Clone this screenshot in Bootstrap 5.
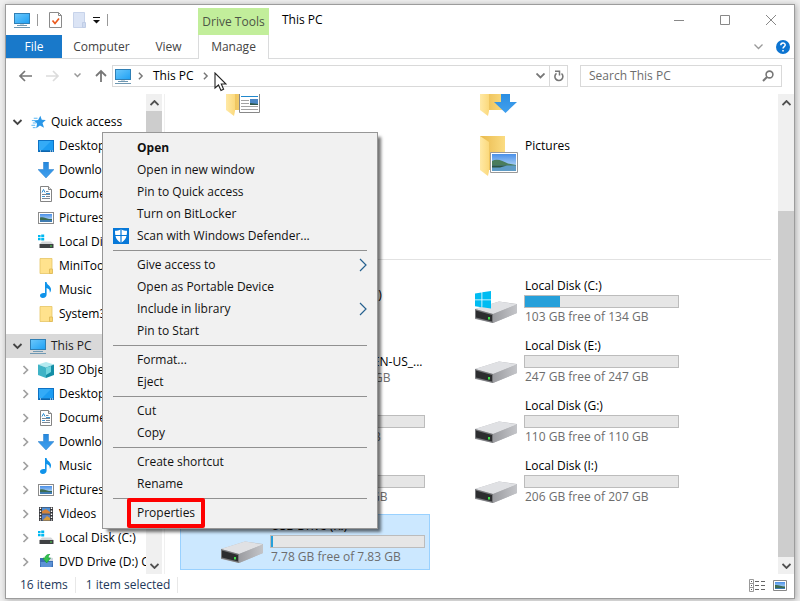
<!DOCTYPE html>
<html lang="en">
<head>
<meta charset="utf-8">
<meta name="viewport" content="width=device-width, initial-scale=1">
<title>This PC</title>
<link href="https://cdn.jsdelivr.net/npm/bootstrap@5.3.0/dist/css/bootstrap.min.css" rel="stylesheet">
<style>
body{font-family:"Open Sans","Noto Sans",sans-serif;font-size:12px;line-height:16px;color:#000;background:#efefef;height:100vh;padding:4px 5px;overflow:hidden}
a,a:hover{color:inherit;text-decoration:none}
button{background:none;border:0;padding:0;color:inherit}
svg{display:block;flex:none}
.win{border:1px solid #9c9c9c;background:#fff;box-shadow:1px 1px 6px rgba(0,0,0,.3)}
.i16{width:16px;height:16px}
/* title bar and ribbon tabs */
.titlebar{height:30px}
.quick{width:192px;padding-left:8px;gap:7px}
.vline{width:1px;height:12px;background:#999}
.drivetools{width:71px;height:27px;background:#c2ee9b;color:#4c5546}
.caption-text{padding-left:13px}
.caption-btn{width:46px;height:30px}
.tabs{height:24px;border-bottom:1px solid #dadbdc;color:#444}
.tabs a{height:23px;display:flex;align-items:center;justify-content:center}
.tabs .file{width:56px;background:#1979ca;color:#fff}
.tabs .t-computer{width:79px}
.tabs .t-view{width:55px}
.tabs .t-manage{width:71px;height:24px;margin-left:2px;border:solid #dadbdc;border-width:0 1px;background:#fff}
.tabs .tools{gap:13px}
.helpbtn{width:14px;height:14px}
/* address row */
.addr{height:35px;padding:0 12px 2px 12px}
.navbtns{width:94px;gap:14px}
.field{height:22px;border:1px solid #d9d9d9}
.addrbox{margin-right:12px;padding-left:2px}
.addrbox .crumb{margin:0 6px 0 7px}
.addrbox .sep-btn{width:18px;height:20px;border-left:1px solid #d9d9d9}
.searchbox{width:202px;padding:0 7px 0 8px}
.searchbox input{border:0;outline:0;padding:0;width:100%;height:18px;background:none;color:#555}
.searchbox input::placeholder{color:#6d6d6d;opacity:1}
.pointer{position:absolute;left:208px;top:67px}
/* navigation pane */
.side{width:159px;border-right:1px solid #f0f0f0}
.tree{overflow:hidden;padding-top:16px;width:140px}
.tree a{height:24px;display:flex;align-items:center;white-space:nowrap;gap:5px;padding-left:14px}
.tree a .tw{width:11px;height:10px;margin-right:2px}
.tree a.top{padding-left:6px}
.tree a.here{background:#d9d9d9;margin-top:8px;color:#222}
.sbar{width:16px;background:#f0f0f0}
.sbar .cap{height:17px}
.sbar .thumb{background:#cdcdcd}
.thumb-side{height:190px}
.thumb-main{margin-top:100px}
/* file view */
.view{overflow:hidden;padding-left:15px}
.tiles{display:grid;grid-template-columns:250px 250px;grid-auto-rows:56px;gap:4px}
.folders{margin-top:-20px}
.groupline{margin:9px 7px 14px 0;border:0;border-top:1px solid #e2e2e2;opacity:1}
.tile{display:flex;border:1px solid transparent;white-space:nowrap}
.tile.on{background:#cce8ff;border-color:#99d1ff}
.tile .pic{width:89px;padding-left:39px}
.tile .pic svg{width:44px;height:54px}
.tile .info{width:155px;padding-top:3px}
.tile .nm{padding-left:1px;overflow:hidden}
.tile .sub{padding-left:1px;color:#6d6d6d}
.tile .meter{height:13px;margin:1px 0 1px;border:1px solid #bcbcbc;background:#e6e6e6;border-radius:0}
.tile .meter .fill{background:#26a0da}
/* status bar */
.status{height:24px;color:#1e395b;padding:0 7px 2px 14px}
.status .cell{padding-right:7px;margin-right:10px;border-right:1px solid #e8e8e8}
/* context menu */
.ctx{position:absolute;left:96px;top:127px;width:276px;background:#f1f1f1;border:1px solid #979797;padding:4px 2px;box-shadow:4px 4px 3px -1px rgba(0,0,0,.55);color:#111}
.ctx button{display:flex;align-items:center;width:100%;height:22px;padding:0 8px 0 8px;text-align:left}
.ctx .gut{width:24px}
.ctx hr{margin:3px 8px;border:0;border-top:1px solid #919191;opacity:1}
.callout{position:absolute;left:-10px;top:-7px;width:78px;height:30px;border:4px solid #fe0000;border-radius:2px}
</style>
<script src="https://cdn.jsdelivr.net/npm/bootstrap@5.3.0/dist/js/bootstrap.bundle.min.js"></script>
</head>
<body class="d-flex flex-column">
<svg width="0" height="0" class="position-absolute" aria-hidden="true">
<defs>
<linearGradient id="gScreen" x1="0" y1="0" x2="1" y2="1"><stop offset="0" stop-color="#6cc8fb"/><stop offset="1" stop-color="#1ea0f4"/></linearGradient>
<linearGradient id="gFold" x1="0" y1="0" x2="1" y2="0"><stop offset="0" stop-color="#e9b94c"/><stop offset="1" stop-color="#fbdc82"/></linearGradient>
<linearGradient id="gFlap" x1="0" y1="0" x2="1" y2="0"><stop offset="0" stop-color="#ffe9a6"/><stop offset="1" stop-color="#fbd97c"/></linearGradient>
<linearGradient id="gSky" x1="0" y1="0" x2="0" y2="1"><stop offset="0" stop-color="#4a90e8"/><stop offset="1" stop-color="#d5ecfb"/></linearGradient>
<linearGradient id="gSide" x1="0" y1="0" x2="1" y2="0"><stop offset="0" stop-color="#9b9ca0"/><stop offset="1" stop-color="#c4c5c9"/></linearGradient>
<linearGradient id="gArrow" x1="0" y1="0" x2="0" y2="1"><stop offset="0" stop-color="#2588dd"/><stop offset="1" stop-color="#41a0ee"/></linearGradient>
</defs>
<symbol id="pc" viewBox="0 0 16 16"><rect x=".5" y="1.5" width="15" height="10" fill="url(#gScreen)" stroke="#2f7fb5"/><path d="M6 12h4v2H6z" fill="#c9d6de"/><path d="M3 13.500h10M0 15.500h16" stroke="#6f98b2"/></symbol>
<symbol id="desk" viewBox="0 0 16 16"><rect x=".5" y="2.500" width="15" height="11" fill="#1c9cf2" stroke="#0e72c4"/><path d="M1 3h12L4 12H1z" fill="#34abf7"/><path d="M1 13h14" stroke="#0c5796"/><path d="M2 13h1M12 13h1M14 13h1" stroke="#fff"/></symbol>
<symbol id="down" viewBox="0 0 16 16"><path d="M5.500 0h5v7.500H16L8 16 0 7.500h5.500z" fill="url(#gArrow)" stroke="#2a7fcb" stroke-width=".5"/></symbol>
<symbol id="doc" viewBox="0 0 16 16"><path d="M2.500.5h8l3 3v12h-11z" fill="#fff" stroke="#848484"/><path d="M10.500.5v3h3" fill="#e5e5e5" stroke="#848484"/><path d="M4 6.500l1.500-3L7 6.500" fill="none" stroke="#2b8fd6"/><path d="M8 5.500h2.500M4 8.500h8M8 10.500h4M4 12.500h8" stroke="#7d8894"/><path d="M4 10.500h3M8 7.500h4" stroke="#3a97d8"/></symbol>
<symbol id="photo" viewBox="0 0 16 16"><rect x=".5" y="2.500" width="15" height="11" fill="#fff" stroke="#8b8b8b"/><rect x="2" y="4" width="12" height="8" fill="url(#gSky)"/><path d="M2 7.500c3-1 6 .5 9 1.500h3v1H2z" fill="#3c6b52"/><path d="M2 10h12v2H2z" fill="#3f7bb0"/></symbol>
<symbol id="disk" viewBox="0 0 16 16"><path d="M0 1h2.600v2.200H0zM3.200.6h3v2.600h-3zM0 4h2.600v2.200H0zM3.200 4h3v2.600h-3z" fill="#00b9f2"/><path d="M4 7.500h9l2.500 2.500h-14z" fill="#d4d6d9"/><path d="M1.500 10h14v4h-14z" fill="#3f4144"/><path d="M12 12h2" stroke="#4cde4c"/></symbol>
<symbol id="fold" viewBox="0 0 16 16"><path d="M2 .5h12v15H2z" fill="#ffe28d" stroke="#e6c565" stroke-width=".8"/><path d="M11.500 11h3v4.500h-3z" fill="#fbd66f" stroke="#dcb857" stroke-width=".8"/></symbol>
<symbol id="music" viewBox="0 0 16 16"><path d="M7 0h1.500c.5 3 4 3.600 4.500 7 .2 1.500-.5 3-1.200 3.800.4-3-1-4.200-3.200-4.900v6.600c0 2-1.500 3.500-3.800 3.500C3 16 2 15 2 13.600c0-1.900 2.300-3.200 5-2.500z" fill="#0f93ea"/></symbol>
<symbol id="cube" viewBox="0 0 16 16"><path d="M8 0l8 2.500-8 3-8-3z" fill="#b4eaf0"/><path d="M0 2.500l8 3V16l-8-3z" fill="#3fb3c6"/><path d="M16 2.500l-8 3V16l8-3z" fill="#148ea6"/><path d="M8 5.500l5-1.500v6l-5 3z" fill="#72d5df"/></symbol>
<symbol id="film" viewBox="0 0 16 16"><path d="M1 1h14v14H1z" fill="#35363a"/><path d="M4 1.500h8v6H4z" fill="#4b8fd8"/><path d="M4 8.500h8v6H4z" fill="#5a7fc0"/><path d="M4 5l4-2 4 3v1.500H4z" fill="#d4823a"/><path d="M5 14l4-4 3 2v2.500H5z" fill="#d89b3a"/><path d="M2.500 1.500v13M13.500 1.500v13" stroke="#fff" stroke-width="1.400" stroke-dasharray="1.500 1.500"/></symbol>
<symbol id="dvd" viewBox="0 0 16 16"><path d="M2 4h4v2h9v7H2z" fill="#3b6fb4"/><path d="M2.500 8h12l-1 5H3z" fill="#5d92d6"/><path d="M10 3l5 1v3h-5z" fill="#cfd7df"/><path d="M5 4h2c0-2 1.500-3.500 5-4C10.500 1.500 10.200 2.500 10.200 4H12.500L8.700 9z" fill="#33c34d" stroke="#149a35" stroke-width=".6"/></symbol>
<symbol id="star" viewBox="0 0 16 16"><path d="M10 .8l1.500 4.400 4.300.3-3.500 3 1.600 5.200-4.300-2.600-4 3 .9-5L3 6l4.600-.6z" fill="#2a97e8"/><path d="M3 3.500h4M1 6h4M2 8.500h4M.5 11h4M2 13.500h3" stroke="#4fb2f2"/></symbol>
<symbol id="chR" viewBox="0 0 11 10"><path d="M3.500 1l4 4-4 4" fill="none" stroke="#a0a0a0" stroke-width="1.700"/></symbol>
<symbol id="crumb" viewBox="0 0 11 10"><path d="M3.500 1l4 4-4 4" fill="none" stroke="#777" stroke-width="1.800"/></symbol>
<symbol id="chD" viewBox="0 0 11 10"><path d="M1.500 3l4 4 4-4" fill="none" stroke="#444" stroke-width="1.800"/></symbol>
<symbol id="bigdrive" viewBox="0 0 44 54"><path d="M1 34L25 26.500 43 29v9L19 48 1 44z" fill="#b7b8bc"/><path d="M1 34L25 26.500 43 29.500 19 39z" fill="#e0e1e4"/><path d="M19 39l24-9.500V38L19 48z" fill="url(#gSide)"/><path d="M1 34l18 5v9L1 43.500z" fill="#77787b"/><path d="M2 35.500l16 4.500v6.500L2 42.500z" fill="#2c2d2f"/><path d="M15 42v2.500" stroke="#3fe04a" stroke-width="2"/></symbol>
<symbol id="windrive" viewBox="0 0 44 54"><use href="#bigdrive" width="44" height="54"/><path d="M1 18.400l6.500-1v7H1zM8.300 17.300L17 16v8.400H8.300zM1 25.200h6.500v7L1 31.200zM8.300 25.200H17v8.400l-8.700-1.300z" fill="#00bcf2"/></symbol>
<symbol id="bigfold" viewBox="0 0 44 54"><path d="M6 1h25v34H6z" fill="url(#gFold)"/><path d="M6 1l9 6v29l-1 5-8-6z" fill="url(#gFlap)"/></symbol>
<symbol id="foldpic" viewBox="0 0 44 54"><use href="#bigfold" width="44" height="54"/><path d="M16.500 17.500h27v20h-27z" fill="#fff" stroke="#999"/><path d="M18 19h24v17H18z" fill="url(#gSky)"/><path d="M18 26c5-3 11 0 16 2.500l8 1.500v1H18z" fill="#4a7d5c"/><path d="M18 30.500h24V36H18z" fill="#5f9cc6"/><path d="M18 30.500h15l-7 2h-8z" fill="#2c5540"/></symbol>
<symbol id="folddoc" viewBox="0 0 44 54"><use href="#bigfold" width="44" height="54"/><path d="M19.500 12.500h20v25h-20z" fill="#fff" stroke="#888"/><path d="M21 21.500h17" stroke="#2088cc"/><path d="M21 25.500h8M21 28.500h8M21 31.500h17M21 34.500h17" stroke="#a3a3a3"/><path d="M30 24h8v6h-8z" fill="#4a86c4"/><path d="M30 28l8 1v1h-8z" fill="#2d5648"/></symbol>
<symbol id="folddown" viewBox="0 0 44 54"><use href="#bigfold" width="44" height="54"/><path d="M27 12h9v15h7L31.500 38 20 27h7z" fill="url(#gArrow)"/></symbol>
</svg>

<div class="win flex-fill d-flex flex-column position-relative">
  <header>
    <div class="titlebar d-flex">
      <div class="quick d-flex align-items-center">
        <svg class="i16"><use href="#pc"/></svg>
        <span class="vline"></span>
        <button aria-label="Properties" class="ms-1"><svg width="13" height="16" viewBox="0 0 13 16"><path d="M.5.500h9l3 3v12H.5z" fill="#fff" stroke="#8a8a8a"/><path d="M9.500.500v3h3" fill="none" stroke="#8a8a8a"/><path d="M3.500 8.500l2.500 3 4-5" fill="none" stroke="#ea5a1e" stroke-width="1.700"/></svg></button>
        <button aria-label="New folder" class="ms-1"><svg width="13" height="16" viewBox="0 0 13 16"><path d="M.5.500h11v15H.5z" fill="#dbe4f5" stroke="#c7d3ea"/><path d="M9.500 10.500h3v5h-3z" fill="#cfdbf0" stroke="#c0cde6"/></svg></button>
        <button aria-label="Customize Quick Access Toolbar"><svg width="7" height="7" viewBox="0 0 7 7"><path d="M0 .5h7" stroke="#111"/><path d="M0 3h7L3.500 6.500z" fill="#111"/></svg></button>
        <span class="vline"></span>
      </div>
      <div class="drivetools d-flex align-items-center justify-content-center align-self-end">Drive Tools</div>
      <div class="caption-text align-self-center flex-fill">This PC</div>
      <button class="caption-btn d-flex align-items-center justify-content-center" aria-label="Minimize"><svg width="10" height="10"><path d="M0 5.500h10" stroke="#888"/></svg></button>
      <button class="caption-btn d-flex align-items-center justify-content-center" aria-label="Maximize"><svg width="10" height="10"><path d="M.5.500h9v9h-9z" fill="none" stroke="#888"/></svg></button>
      <button class="caption-btn d-flex align-items-center justify-content-center" aria-label="Close"><svg width="10" height="10"><path d="M0 0l10 10M10 0L0 10" stroke="#888"/></svg></button>
    </div>
    <nav class="tabs d-flex" aria-label="Ribbon">
      <a href="#" class="file">File</a><a href="#" class="t-computer">Computer</a><a href="#" class="t-view">View</a><a href="#" class="t-manage">Manage</a>
      <div class="tools ms-auto d-flex align-items-center pe-1">
        <button aria-label="Minimize the Ribbon"><svg width="9" height="6"><path d="M.5 .5l4 4 4-4" fill="none" stroke="#999" stroke-width="1.300"/></svg></button>
        <button aria-label="Help"><svg class="helpbtn" viewBox="0 0 14 14"><circle cx="7" cy="7" r="7" fill="#0c74d1"/><path d="M4.800 5.300c0-3 4.400-3 4.400-.3C9.200 6.600 7 6.600 7 8.600M7 10v1.600" fill="none" stroke="#fff" stroke-width="1.500"/></svg></button>
      </div>
    </nav>
  </header>

  <div class="addr d-flex align-items-center">
    <div class="navbtns d-flex align-items-center flex-shrink-0">
      <button aria-label="Back"><svg width="14" height="12"><path d="M14 6H2M7 1L2 6l5 5" fill="none" stroke="#777" stroke-width="1.700"/></svg></button>
      <button aria-label="Forward"><svg width="14" height="12"><path d="M0 6h12M7 1l5 5-5 5" fill="none" stroke="#dcdcdc" stroke-width="1.700"/></svg></button>
      <button aria-label="Recent locations"><svg width="7" height="5"><path d="M.5 .5l3 3 3-3" fill="none" stroke="#999" stroke-width="1.500"/></svg></button>
      <button aria-label="Up"><svg width="12" height="13"><path d="M6 13V2M1 7l5-5 5 5" fill="none" stroke="#777" stroke-width="1.800"/></svg></button>
    </div>
    <div class="addrbox field flex-fill d-flex align-items-center">
      <svg class="i16 me-1"><use href="#pc"/></svg>
      <svg width="11" height="8"><use href="#crumb"/></svg>
      <a href="#" class="crumb">This PC</a>
      <svg width="11" height="8"><use href="#crumb"/></svg>
      <button class="ms-auto me-1" aria-label="Previous locations"><svg width="9" height="6"><path d="M.5 .5l4 4 4-4" fill="none" stroke="#777" stroke-width="1.800"/></svg></button>
      <button class="sep-btn d-flex align-items-center justify-content-center" aria-label="Refresh"><svg width="11" height="12" viewBox="0 0 11 12"><path d="M8.500 3.500a4 4 0 1 1-5 -.2" fill="none" stroke="#777" stroke-width="1.600"/><path d="M2 1.200h4.500V5.500" fill="none" stroke="#777" stroke-width="1.500"/></svg></button>
    </div>
    <div class="searchbox field d-flex align-items-center flex-shrink-0">
      <label for="q" class="visually-hidden">Search</label><input id="q" type="text" placeholder="Search This PC">
      <svg width="12" height="12" viewBox="0 0 12 12"><circle cx="7.500" cy="4.500" r="3.400" fill="none" stroke="#777" stroke-width="1.600"/><path d="M5 7L1 11" stroke="#777" stroke-width="2"/></svg>
    </div>
  </div>

  <div class="flex-fill d-flex overflow-hidden">
    <nav class="side d-flex flex-shrink-0" aria-label="Navigation pane">
      <div class="tree flex-shrink-0">
        <a href="#" class="top"><svg class="tw"><use href="#chD"/></svg><svg class="i16" viewBox="-1 -1 17 17"><use href="#star" width="16" height="16"/></svg>Quick access</a>
        <a href="#"><span class="tw"></span><svg class="i16"><use href="#desk"/></svg>Desktop</a>
        <a href="#"><span class="tw"></span><svg class="i16"><use href="#down"/></svg>Downloads</a>
        <a href="#"><span class="tw"></span><svg class="i16"><use href="#doc"/></svg>Documents</a>
        <a href="#"><span class="tw"></span><svg class="i16"><use href="#photo"/></svg>Pictures</a>
        <a href="#"><span class="tw"></span><svg class="i16"><use href="#disk"/></svg>Local Disk (C:)</a>
        <a href="#"><span class="tw"></span><svg class="i16"><use href="#fold"/></svg>MiniTool</a>
        <a href="#"><span class="tw"></span><svg class="i16"><use href="#music"/></svg>Music</a>
        <a href="#"><span class="tw"></span><svg class="i16"><use href="#fold"/></svg>System32</a>
        <a href="#" class="top here"><svg class="tw"><use href="#chD"/></svg><svg class="i16"><use href="#pc"/></svg>This PC</a>
        <a href="#"><svg class="tw"><use href="#chR"/></svg><svg class="i16"><use href="#cube"/></svg>3D Objects</a>
        <a href="#"><svg class="tw"><use href="#chR"/></svg><svg class="i16"><use href="#desk"/></svg>Desktop</a>
        <a href="#"><svg class="tw"><use href="#chR"/></svg><svg class="i16"><use href="#doc"/></svg>Documents</a>
        <a href="#"><svg class="tw"><use href="#chR"/></svg><svg class="i16"><use href="#down"/></svg>Downloads</a>
        <a href="#"><svg class="tw"><use href="#chR"/></svg><svg class="i16"><use href="#music"/></svg>Music</a>
        <a href="#"><svg class="tw"><use href="#chR"/></svg><svg class="i16"><use href="#photo"/></svg>Pictures</a>
        <a href="#"><svg class="tw"><use href="#chR"/></svg><svg class="i16"><use href="#film"/></svg>Videos</a>
        <a href="#"><svg class="tw"><use href="#chR"/></svg><svg class="i16"><use href="#disk"/></svg>Local Disk (C:)</a>
        <a href="#"><svg class="tw"><use href="#chR"/></svg><svg class="i16"><use href="#dvd"/></svg>DVD Drive (D:) C</a>
      </div>
      <div class="sbar d-flex flex-column">
        <div class="cap d-flex align-items-center justify-content-center"><svg width="9" height="6"><path d="M.5 5l4-4 4 4" fill="none" stroke="#505050" stroke-width="1.800"/></svg></div>
        <div class="thumb thumb-side"></div>
        <div class="cap d-flex align-items-center justify-content-center mt-auto"><svg width="9" height="6"><path d="M.5 1l4 4 4-4" fill="none" stroke="#505050" stroke-width="1.800"/></svg></div>
      </div>
    </nav>

    <main class="view flex-fill">
      <div class="tiles folders">
        <a href="#" class="tile"><span class="pic"><svg><use href="#folddoc"/></svg></span></a>
        <a href="#" class="tile"><span class="pic"><svg><use href="#folddown"/></svg></span></a>
        <a href="#" class="tile"><span class="pic"><svg><use href="#bigfold"/></svg></span></a>
        <a href="#" class="tile"><span class="pic"><svg><use href="#foldpic"/></svg></span><span class="info"><span class="nm">Pictures</span></span></a>
        <a href="#" class="tile"><span class="pic"><svg><use href="#bigfold"/></svg></span></a>
      </div>
      <hr class="groupline">
      <div class="tiles">
        <a href="#" class="tile"><span class="pic"><svg><use href="#bigdrive"/></svg></span><span class="info pt-2"><span class="nm d-block pt-1">CDRW Disk Drive (J:)</span></span></a>
        <a href="#" class="tile"><span class="pic"><svg><use href="#windrive"/></svg></span><span class="info"><span class="nm">Local Disk (C:)</span><span class="meter progress"><span class="fill" style="width:23%"></span></span><span class="sub">103 GB free of 134 GB</span></span></a>
        <a href="#" class="tile"><span class="pic"><svg><use href="#bigdrive"/></svg></span><span class="info"><span class="nm d-block">DVD Drive (D:)</span><span class="nm d-block">CCCOMA_X64FRE_EN-US_...</span><span class="sub">0 bytes free of 4.1 GB</span></span></a>
        <a href="#" class="tile"><span class="pic"><svg><use href="#bigdrive"/></svg></span><span class="info"><span class="nm">Local Disk (E:)</span><span class="meter progress"></span><span class="sub">247 GB free of 247 GB</span></span></a>
        <a href="#" class="tile"><span class="pic"><svg><use href="#bigdrive"/></svg></span><span class="info"><span class="nm">Local Disk (F:)</span><span class="meter progress"></span><span class="sub">99 GB free of 99 GB</span></span></a>
        <a href="#" class="tile"><span class="pic"><svg><use href="#bigdrive"/></svg></span><span class="info"><span class="nm">Local Disk (G:)</span><span class="meter progress"></span><span class="sub">110 GB free of 110 GB</span></span></a>
        <a href="#" class="tile"><span class="pic"><svg><use href="#bigdrive"/></svg></span><span class="info"><span class="nm">Local Disk (H:)</span><span class="meter progress"></span><span class="sub">97 GB free of 100 GB</span></span></a>
        <a href="#" class="tile"><span class="pic"><svg><use href="#bigdrive"/></svg></span><span class="info"><span class="nm">Local Disk (I:)</span><span class="meter progress"></span><span class="sub">206 GB free of 207 GB</span></span></a>
        <a href="#" class="tile on"><span class="pic"><svg><use href="#bigdrive"/></svg></span><span class="info"><span class="nm">USB Drive (K:)</span><span class="meter progress"><span class="fill" style="width:1%"></span></span><span class="sub">7.78 GB free of 7.83 GB</span></span></a>
      </div>
    </main>
    <div class="sbar d-flex flex-column flex-shrink-0">
      <div class="cap d-flex align-items-center justify-content-center"><svg width="9" height="6"><path d="M.5 5l4-4 4 4" fill="none" stroke="#505050" stroke-width="1.800"/></svg></div>
      <div class="thumb thumb-main flex-fill"></div>
      <div class="cap d-flex align-items-center justify-content-center"><svg width="9" height="6"><path d="M.5 1l4 4 4-4" fill="none" stroke="#505050" stroke-width="1.800"/></svg></div>
    </div>
  </div>

  <footer class="status d-flex align-items-center flex-shrink-0">
    <span class="cell">16 items</span><span class="cell">1 item selected</span>
    <div class="ms-auto d-flex align-items-center gap-2">
      <button aria-label="Details view"><svg width="16" height="13"><path d="M.5.500h4v12h-4zM.5 4.500h4M.5 8.500h4" fill="none" stroke="#999"/><path d="M2 2.500h1M2 6.500h1M2 10.500h1" stroke="#555"/><path d="M6 2.500h4M12 2.500h4M6 6.500h4M12 6.500h4M6 10.500h4M12 10.500h4" stroke="#666"/></svg></button>
      <button aria-label="Large icons view"><svg width="14" height="11"><path d="M.5.500h13v10H.5z" fill="#fff" stroke="#888"/><path d="M2 2h10v7H2z" fill="url(#gSky)"/><path d="M2 5c3-.500 6 1 10 1.500V8H2z" fill="#3c6b52"/><path d="M2 8h10v1H2z" fill="#3f7bb0"/></svg></button>
    </div>
  </footer>

  <div class="ctx" role="menu">
    <button role="menuitem" class="fw-bold"><span class="gut"></span>Open</button>
    <button role="menuitem"><span class="gut"></span>Open in new window</button>
    <button role="menuitem"><span class="gut"></span>Pin to Quick access</button>
    <button role="menuitem"><span class="gut"></span>Turn on BitLocker</button>
    <button role="menuitem"><span class="gut"><svg class="i16" viewBox="0 0 16 16"><path d="M0 0h16v16H0z" fill="#0778d8"/><path d="M8 1.200c2 1.200 3.800 1.500 6 1.600 0 5.500-1 9.500-6 12-5-2.500-6-6.500-6-12 2.200-.1 4-.4 6-1.600z" fill="#fff"/><path d="M8 1v14M2 7.500h12" stroke="#0778d8" stroke-width="1.200"/></svg></span>Scan with Windows Defender...</button>
    <hr>
    <button role="menuitem"><span class="gut"></span>Give access to<svg class="ms-auto" width="8" height="14"><path d="M1 1l6 6-6 6" fill="none" stroke="#26618f" stroke-width="1.200"/></svg></button>
    <button role="menuitem"><span class="gut"></span>Open as Portable Device</button>
    <button role="menuitem"><span class="gut"></span>Include in library<svg class="ms-auto" width="8" height="14"><path d="M1 1l6 6-6 6" fill="none" stroke="#26618f" stroke-width="1.200"/></svg></button>
    <button role="menuitem"><span class="gut"></span>Pin to Start</button>
    <hr>
    <button role="menuitem"><span class="gut"></span>Format...</button>
    <button role="menuitem"><span class="gut"></span>Eject</button>
    <hr>
    <button role="menuitem"><span class="gut"></span>Cut</button>
    <button role="menuitem"><span class="gut"></span>Copy</button>
    <hr>
    <button role="menuitem"><span class="gut"></span>Create shortcut</button>
    <button role="menuitem"><span class="gut"></span>Rename</button>
    <hr>
    <button role="menuitem"><span class="gut"></span><span class="position-relative">Properties<span class="callout"></span></span></button>
  </div>
  <svg class="pointer" width="13" height="20" viewBox="0 0 13 20"><path d="M1 1v15l3.500-3 2.500 5.500 2.600-1.200L7.300 12H12z" fill="#fff" stroke="#222" stroke-width="1.100"/></svg>
</div>
</body>
</html>
